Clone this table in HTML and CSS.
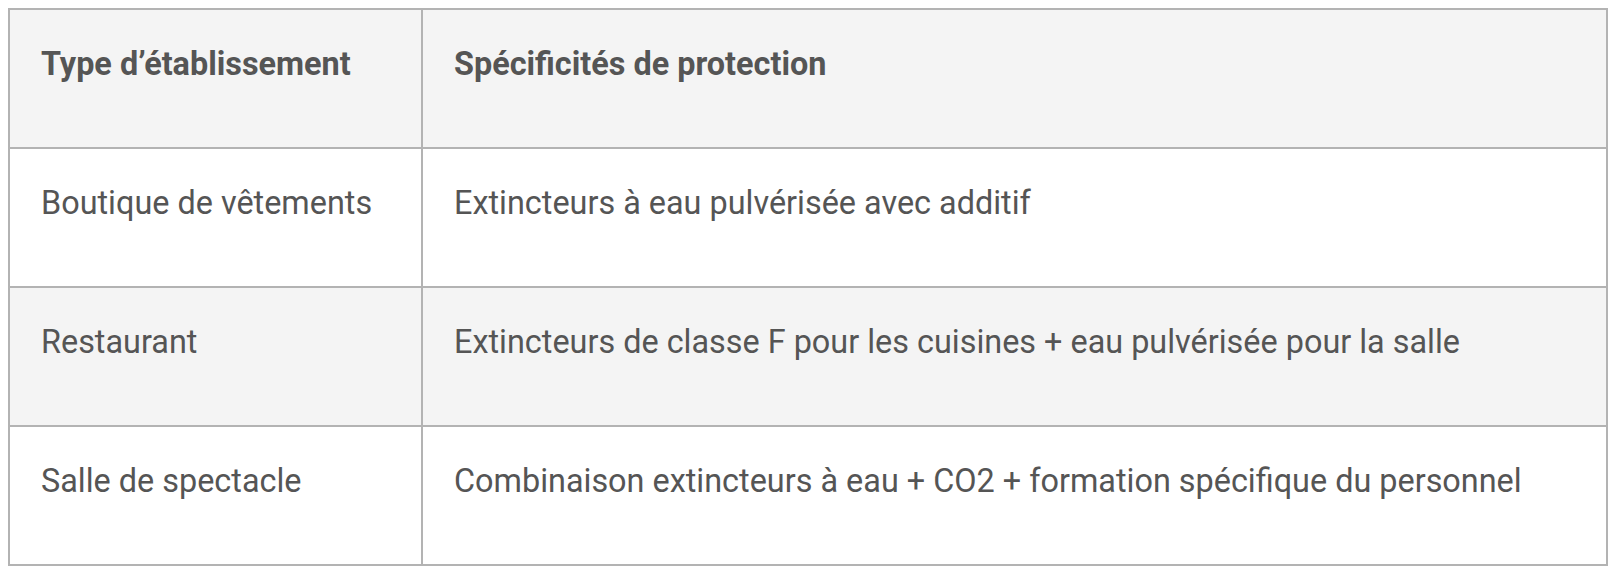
FILE: index.html
```html
<!DOCTYPE html>
<html lang="fr">
<head>
<meta charset="utf-8">
<link rel="stylesheet" href="styles.css">
</head>
<body>
<table class="spec-table">
  <thead>
    <tr>
      <th class="col-type">Type d’établissement</th>
      <th>Spécificités de protection</th>
    </tr>
  </thead>
  <tbody>
    <tr class="row-white">
      <td>Boutique de vêtements</td>
      <td>Extincteurs à eau pulvérisée avec additif</td>
    </tr>
    <tr class="row-grey">
      <td>Restaurant</td>
      <td>Extincteurs de classe F pour les cuisines + eau pulvérisée pour la salle</td>
    </tr>
    <tr class="row-white">
      <td>Salle de spectacle</td>
      <td>Combinaison extincteurs à eau + CO2 + formation spécifique du personnel</td>
    </tr>
  </tbody>
</table>
</body>
</html>
```
FILE: styles.css
```css
html, body {
  background: #ffffff;
}
body {
  margin: 8px;
  font-family: Roboto, "Liberation Sans", sans-serif;
  color: #555555;
}
.spec-table {
  width: 100%;
  border-collapse: collapse;
  border: 2px solid #b3b3b3;
}
.spec-table th,
.spec-table td {
  border: 2px solid #b3b3b3;
  text-align: left;
  vertical-align: top;
  font-size: 32.4px;
  line-height: 48px;
  padding: 30px 32px 59px 31px;
}
.spec-table th {
  font-weight: 700;
  background: #f4f4f4;
}
.spec-table td {
  font-weight: 400;
}
.col-type {
  width: 348px;
}
.row-grey td {
  background: #f4f4f4;
}
.row-white td {
  background: #ffffff;
}
```
